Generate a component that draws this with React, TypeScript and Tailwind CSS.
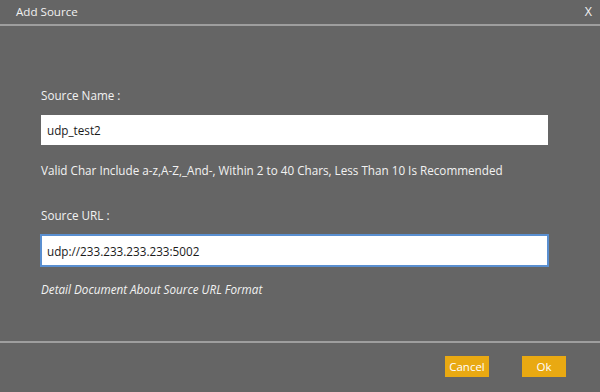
import React from "react";

export default function App() {
  return (
    <div
      className="w-[600px] h-[392px] bg-[#656565] text-[#f2f2f2] flex flex-col overflow-hidden"
      style={{ fontFamily: '"Open Sans", "Noto Sans", sans-serif' }}
    >
      <div className="h-[24px] flex items-center justify-between pl-[16px] pr-[8px] text-[11.6px] leading-none">
        <span>Add Source</span>
        <span className="text-[12.5px]">X</span>
      </div>
      <div className="h-[2px] bg-[#9e9e9e]" />
      <div className="flex-1 flex flex-col px-[40px]">
        <div className="mt-[61px] text-[11.7px] leading-[16px] pl-[1px]">Source Name :</div>
        <input
          readOnly
          value="udp_test2"
          className="mt-[12px] ml-[1px] w-[507px] h-[30px] bg-white text-[#1a1a1a] text-[11.7px] px-[6px] outline-none"
        />
        <div className="mt-[17px] text-[11.7px] leading-[16px] pl-[1px]">
          Valid Char Include a-z,A-Z,_And-, Within 2 to 40 Chars, Less Than 10 Is Recommended
        </div>
        <div className="mt-[29px] text-[11.7px] leading-[16px] pl-[1px]">Source URL :</div>
        <input
          readOnly
          value="udp://233.233.233.233:5002"
          className="mt-[11px] w-[509px] h-[33px] bg-white text-[#1a1a1a] text-[11.7px] px-[5px] border-2 border-[#5a8fd0] outline-none"
        />
        <div className="mt-[14px] text-[11.7px] leading-[16px] italic pl-[1px]">
          Detail Document About Source URL Format
        </div>
      </div>
      <div className="h-[2px] bg-[#9e9e9e]" />
      <div className="h-[49px] flex items-start justify-end pt-[13px] pr-[34px] gap-[33px]">
        <button className="w-[44px] h-[21px] bg-[#e9a912] text-white text-[11.5px] leading-none flex items-center justify-center">
          Cancel
        </button>
        <button className="w-[44px] h-[21px] bg-[#e9a912] text-white text-[11.5px] leading-none flex items-center justify-center">
          Ok
        </button>
      </div>
    </div>
  );
}
